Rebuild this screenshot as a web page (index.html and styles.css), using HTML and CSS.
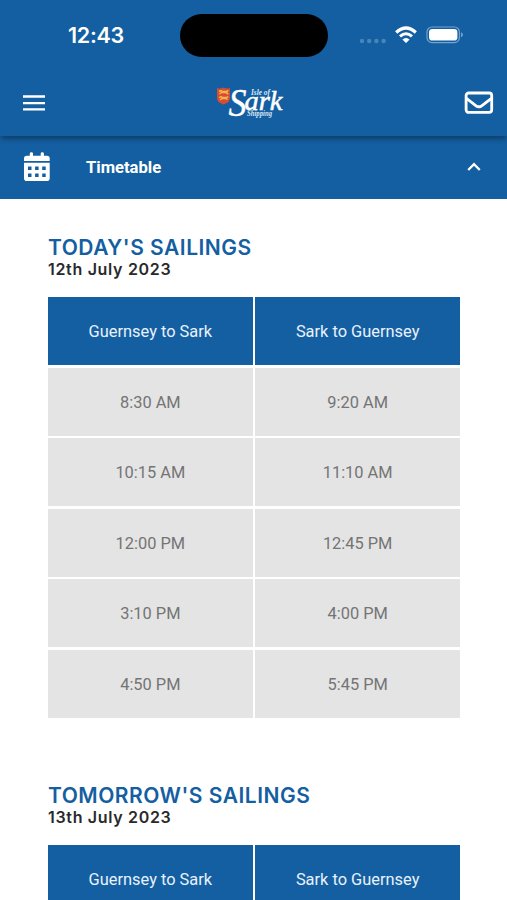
FILE: index.html
```html
<!DOCTYPE html>
<html lang="en">
<head>
  <meta charset="UTF-8">
  <title>Timetable - Isle of Sark Shipping</title>
  <link rel="stylesheet" href="styles.css">
</head>
<body>
  <!-- Status bar -->
  <div class="status-bar">
    <div class="clock">12:43</div>
    <div class="island"></div>
    <div class="status-icons">
      <svg class="signal" width="28" height="6" viewBox="0 0 28 6">
        <circle cx="3" cy="3" r="2.2"/>
        <circle cx="10.2" cy="3" r="2.2"/>
        <circle cx="17.4" cy="3" r="2.2"/>
        <circle cx="24.6" cy="3" r="2.2"/>
      </svg>
      <svg class="wifi" width="24" height="18" viewBox="0 0 24 18">
        <path d="M2.2 6.5 Q12 -2.5 21.8 6.5" stroke-width="3.2"/>
        <path d="M6 10.4 Q12 5 18 10.4" stroke-width="3"/>
        <path d="M12 16.8 L8.8 13.6 Q12 10.9 15.2 13.6 Z" class="wifi-dot"/>
      </svg>
      <svg class="battery" width="38" height="18" viewBox="0 0 38 18">
        <rect x="1" y="1" width="32.4" height="15.6" rx="5" class="battery-case"/>
        <rect x="3" y="3" width="28.4" height="11.6" rx="3.4" class="battery-level"/>
        <path d="M35 6.3 Q37 7 37 8.8 Q37 10.6 35 11.3 Z" class="battery-tip"/>
      </svg>
    </div>
  </div>

  <!-- Header -->
  <header class="header">
    <svg class="menu" width="22" height="16" viewBox="0 0 22 16">
      <path d="M0 1.5H22M0 8.1H22M0 14.4H22"/>
    </svg>
    <svg class="logo" width="74" height="40" viewBox="0 0 74 40">
      <path d="M1 3 Q4.5 4.2 7.5 2.6 Q10.5 4.2 14 3 V13 Q14 17.5 7.5 19.5 Q1 17.5 1 13 Z" class="shield"/>
      <path d="M3 6.5l2-1 1.5 1h4l1.8-1M3.5 9l2-1.5h4.5l2.3 1.5M3 12.6l2-1 1.5 1h4l1.8-1M4 15l2-1.5h4l1.5 1.2" class="lions"/>
      <text x="12.5" y="31" class="logo-s" textLength="18" lengthAdjust="spacingAndGlyphs">S</text>
      <text x="28.5" y="24.6" class="logo-ark" textLength="38" lengthAdjust="spacingAndGlyphs">ark</text>
      <text x="35" y="9.6" class="logo-small" textLength="19" lengthAdjust="spacingAndGlyphs">Isle of</text>
      <text x="31" y="31.4" class="logo-small" textLength="25" lengthAdjust="spacingAndGlyphs">Shipping</text>
    </svg>
    <svg class="mail" width="30" height="24" viewBox="0 0 30 24">
      <rect x="2.1" y="2" width="25.6" height="19.4" rx="2.6"/>
      <path d="M2.4 7.4L11.8 14.6Q14.9 17 18 14.6L27.4 7.4"/>
    </svg>
  </header>

  <!-- Section bar -->
  <div class="section-bar">
    <svg class="calendar" width="26" height="30" viewBox="0 0 26 30">
      <path d="M0 9V6.6Q0 3.8 2.8 3.8H5.8V1.6Q5.8 .3 7.4 .3T9 1.6V3.8H16.7V1.6Q16.7 .3 18.3 .3T19.9 1.6V3.8H22.9Q25.7 3.8 25.7 6.6V9Z"/>
      <path fill-rule="evenodd" d="M0 10.8H25.7V26.2Q25.7 29 22.9 29H2.8Q0 29 0 26.2ZM4 14.5v3.5h3.5v-3.5zM11.1 14.5v3.5h3.5v-3.5zM18.2 14.5v3.5h3.5v-3.5zM4 21.6v3.5h3.5v-3.5zM11.1 21.6v3.5h3.5v-3.5zM18.2 21.6v3.5h3.5v-3.5z"/>
    </svg>
    <span class="section-title">Timetable</span>
    <svg class="chevron" width="14" height="10" viewBox="0 0 14 10">
      <path d="M1.2 8L7 2.2L12.8 8"/>
    </svg>
  </div>

  <main class="content">
    <section class="sailings">
      <h2>TODAY'S SAILINGS</h2>
      <p class="date">12th July 2023</p>
      <div class="timetable">
        <div class="cell head">Guernsey to Sark</div>
        <div class="cell head">Sark to Guernsey</div>
        <div class="cell">8:30 AM</div>
        <div class="cell">9:20 AM</div>
        <div class="cell">10:15 AM</div>
        <div class="cell">11:10 AM</div>
        <div class="cell">12:00 PM</div>
        <div class="cell">12:45 PM</div>
        <div class="cell">3:10 PM</div>
        <div class="cell">4:00 PM</div>
        <div class="cell">4:50 PM</div>
        <div class="cell">5:45 PM</div>
      </div>
    </section>

    <section class="sailings">
      <h2>TOMORROW'S SAILINGS</h2>
      <p class="date">13th July 2023</p>
      <div class="timetable">
        <div class="cell head">Guernsey to Sark</div>
        <div class="cell head">Sark to Guernsey</div>
      </div>
    </section>
  </main>
</body>
</html>
```
FILE: styles.css
```css
* {
  box-sizing: border-box;
}
body {
  margin: 0;
  height: 900px;
  overflow: hidden;
  background: #fff;
  font-family: Roboto, "Liberation Sans", sans-serif;
}
svg {
  display: block;
  flex: none;
}

/* Status bar */
.status-bar {
  display: flex;
  align-items: flex-start;
  height: 70px;
  padding-top: 14px;
  background: #145fa1;
}
.clock {
  width: 112px;
  margin-left: 68px;
  padding-top: 8px;
  color: #fff;
  font: 600 21.5px/27px Inter, sans-serif;
  letter-spacing: -0.3px;
}
.island {
  width: 148px;
  height: 43px;
  border-radius: 22px;
  background: #000;
}
.status-icons {
  display: flex;
  padding: 12px 0 0 31px;
}
.signal {
  margin-top: 12px;
  fill: #4785ba;
}
.wifi {
  margin-left: 7px;
  fill: none;
  stroke: #fff;
}
.wifi-dot {
  fill: #fff;
  stroke: #fff;
  stroke-width: 0.6;
}
.battery {
  margin-left: 8px;
}
.battery-case {
  fill: none;
  stroke: #76a3cb;
  stroke-width: 1.2;
}
.battery-level {
  fill: #fff;
}
.battery-tip {
  fill: #76a3cb;
}

/* Header */
.header {
  position: relative;
  display: flex;
  justify-content: space-between;
  height: 66px;
  padding: 0 13px 0 23px;
  background: #145fa1;
  box-shadow: 0 4px 5px -1px rgba(0, 0, 0, 0.35);
}
.menu {
  margin-top: 25px;
  fill: none;
  stroke: #fff;
  stroke-width: 2.4;
}
.logo {
  margin: 15px 0 0 -4px;
  overflow: visible;
}
.shield {
  fill: #d94b35;
}
.lions {
  fill: none;
  stroke: #f3b64b;
  stroke-width: 1.5;
}
.logo text {
  fill: #fff;
  font-family: "Liberation Serif", serif;
  font-style: italic;
}
.logo .logo-s {
  font-size: 41px;
  stroke: #fff;
  stroke-width: 0.4;
}
.logo .logo-ark {
  font-size: 27px;
  stroke: #fff;
  stroke-width: 0.5;
}
.logo .logo-small {
  font-size: 7.5px;
  font-weight: bold;
  fill: #dce8f3;
}
.mail {
  margin-top: 21px;
  fill: none;
  stroke: #fff;
  stroke-width: 2.8;
}

/* Section bar */
.section-bar {
  display: flex;
  align-items: center;
  height: 63px;
  padding: 0 26px 1px 24px;
  background: #145fa1;
  color: #fff;
}
.calendar {
  fill: #fff;
}
.section-title {
  flex: 1;
  margin-left: 36px;
  font-size: 16.6px;
  font-weight: 700;
}
.chevron {
  fill: none;
  stroke: #fff;
  stroke-width: 2.3;
}

/* Sailings */
.content {
  padding: 37px 47px 0 48px;
}
.sailings {
  margin-bottom: 66px;
}
.sailings h2 {
  margin: 0;
  color: #145fa1;
  font: 600 21px/23px Inter, sans-serif;
  letter-spacing: 0.5px;
}
.date {
  margin: 0 0 18px;
  color: #29292b;
  font: 600 16px/20px Inter, sans-serif;
  letter-spacing: 0.68px;
}
.timetable {
  display: grid;
  grid-template-columns: 1fr 1fr;
  grid-auto-rows: 68px;
  gap: 2.6px;
}
.cell {
  display: flex;
  align-items: center;
  justify-content: center;
  padding-top: 1px;
  background: #e4e4e4;
  color: #747474;
  font-size: 16.4px;
}
.cell.head {
  background: #145fa1;
  color: #e9f2fc;
}
```
